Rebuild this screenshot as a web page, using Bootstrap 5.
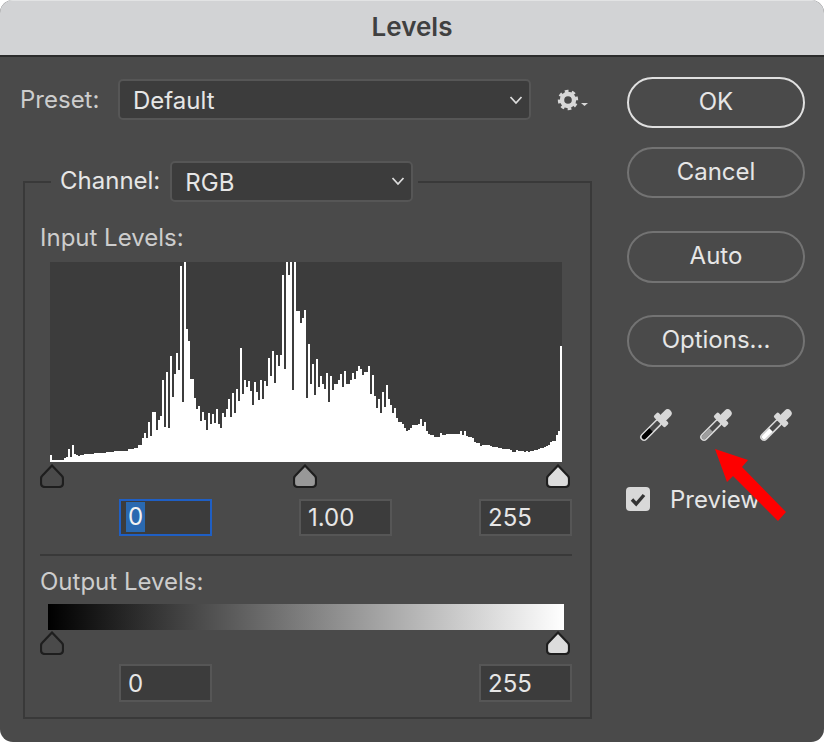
<!DOCTYPE html>
<html lang="en">
<head>
<meta charset="utf-8">
<title>Levels</title>
<link href="https://cdn.jsdelivr.net/npm/bootstrap@5.3.0/dist/css/bootstrap.min.css" rel="stylesheet">
<style>
html,body{margin:0;background:#fff;}
body{width:824px;height:742px;overflow:hidden;font-family:Inter,"Liberation Sans",sans-serif;font-size:24px;}
.lv-dialog{position:relative;width:824px;height:742px;background:#4a4a4a;border-radius:13px;overflow:hidden;color:#e6e6e6;}
.lv-title{height:57px;background:#d2d3d5;border-top:1px solid #e2e3e4;border-bottom:2px solid #2c2c2c;color:#404040;font-weight:600;font-size:26px;line-height:51px;text-align:center;}
.lv-main{padding-left:20px;}
.lv-left{width:572px;}
.lv-right{width:178px;margin-left:35px;padding-top:20px;}
.lv-preset{margin-top:22px;height:41px;}
.lv-label{color:#cdcdcd;font-size:24px;line-height:28px;}
.lv-preset .lv-label{width:98px;}
.lv-select.form-select{height:41px;width:413px;padding:2px 36px 0 13px;font-size:24px;line-height:36px;color:#e6e6e6;background-color:#3c3c3c;border:2px solid #565656;border-radius:5px;box-shadow:none;
background-image:url("data:image/svg+xml,%3Csvg xmlns='http://www.w3.org/2000/svg' viewBox='0 0 14 10'%3E%3Cpath d='M1.5 2 7 8l5.5-6' fill='none' stroke='%23dcdcdc' stroke-width='1.8'/%3E%3C/svg%3E");background-size:14px 10px;background-position:right 6px center;}
.lv-gear{margin-left:26px;}
.lv-group{margin:61px 0 0 3px;width:569px;height:538px;border:2px solid #393939;padding:0 15px;}
.lv-legend{margin:-23px 0 0 11px;width:fit-content;height:42px;background:#4a4a4a;padding:0 5px 0 9px;gap:10px;}
.lv-legend .lv-label{color:#e6e6e6;}
.lv-legend .lv-select.form-select{width:243px;}
.lv-input-title{margin-top:22px;}
.lv-hist{display:block;margin:10px 0 0 10px;width:512px;height:200px;background:#3c3c3c;}
.lv-handles{width:530px;height:24px;margin-top:2px;}
.lv-handles svg{display:block;}
.lv-inputs{margin:11px 0 0 79px;width:453px;}
.lv-field.form-control{width:93px;height:37px;padding:0 7px;background:#3c3c3c;border:2px solid #565656;border-radius:0;color:#e6e6e6;font-size:24px;line-height:33px;box-shadow:none;}
.lv-field.lv-focus{border-color:#1f5fc4;}
.lv-sel{background:#2a69b0;color:#f2f2f2;display:inline-block;line-height:30px;padding:0 2px;margin:1px 0 0 -2px;height:30px;vertical-align:top;}
.lv-rule{height:2px;background:#393939;margin:18px 0 0;width:532px;opacity:1;border:0;}
.lv-output-title{margin-top:12px;}
.lv-ramp{width:516px;height:26px;margin:8px 0 0 8px;background:linear-gradient(90deg,#000 0,#fff 100%);}
.lv-handles.lv-out{margin-top:1px;}
.lv-inputs.lv-outvals{margin-top:9px;}
.lv-inputs.lv-outvals .lv-field.form-control{height:38px;}
.lv-btn.btn{display:block;width:178px;height:51px;padding:0 0 2px;border:2px solid #737373;border-radius:26px;background:transparent;color:#e6e6e6;font-size:24px;line-height:44px;}
.lv-btn.lv-ok{border-color:#e0e0e0;}
.lv-btn.lv-m1{margin-top:19px;}
.lv-btn.lv-m2{margin-top:33px;height:52px;}
.lv-btn.lv-m3{margin-top:32px;height:52px;}
.lv-droppers{margin:42px 0 0 13px;gap:28px;height:32px;}
.lv-droppers svg{overflow:visible;display:block;}
.lv-check{margin:46px 0 0 -1px;padding:0;min-height:0;gap:20px;height:24px;}
.lv-check .form-check-input{float:none;width:24px;height:24px;margin:0;background-color:#d8d8d8;border:0;border-radius:4px;box-shadow:none;opacity:1;
background-image:url("data:image/svg+xml,%3Csvg xmlns='http://www.w3.org/2000/svg' viewBox='0 0 24 24'%3E%3Cpath d='M6 12.5 10.2 17 18 8' fill='none' stroke='%23333' stroke-width='3.4'/%3E%3C/svg%3E");background-size:24px 24px;}
.lv-check .form-check-label{color:#e6e6e6;line-height:24px;padding-top:2px;opacity:1;}
.lv-arrow{position:absolute;left:700px;top:440px;overflow:visible;}
</style>
</head>
<body>
<div class="lv-dialog">
  <div class="lv-title">Levels</div>
  <div class="lv-main d-flex">
    <div class="lv-left">
      <div class="lv-preset d-flex align-items-center">
        <div class="lv-label">Preset:</div>
        <select class="form-select lv-select"><option>Default</option></select>
        <svg class="lv-gear" width="32" height="22" viewBox="0 0 32 22" aria-hidden="true">
          <circle cx="11" cy="11" r="6" fill="none" stroke="#d8d8d8" stroke-width="4.4"/>
          <circle cx="11" cy="11" r="8.8" fill="none" stroke="#d8d8d8" stroke-width="2.8" stroke-dasharray="3.6 3.31" transform="rotate(-22 11 11)"/>
          <path d="M24 14h7l-3.5 3z" fill="#d8d8d8"/>
        </svg>
      </div>
      <div class="lv-group">
        <div class="lv-legend d-flex align-items-center">
          <div class="lv-label">Channel:</div>
          <select class="form-select lv-select"><option>RGB</option></select>
        </div>
        <div class="lv-label lv-input-title">Input Levels:</div>
        <svg class="lv-hist" viewBox="0 0 512 200" shape-rendering="crispEdges" aria-hidden="true"><path id="lvHistPath" fill="#fff" d=""/></svg>
        <div class="lv-handles d-flex justify-content-between">
          <svg width="24" height="24" viewBox="0 0 24 24"><path d="M12 1.5 22 12q1 1 1 3v4q0 4-4 4H5q-4 0-4-4v-4q0-2 1-3z" fill="none" stroke="#1e1e1e" stroke-width="2.2"/></svg>
          <svg width="24" height="24" viewBox="0 0 24 24"><path d="M12 1.5 22 12q1 1 1 3v4q0 4-4 4H5q-4 0-4-4v-4q0-2 1-3z" fill="#989898" stroke="#1e1e1e" stroke-width="2.2"/></svg>
          <svg width="24" height="24" viewBox="0 0 24 24"><path d="M12 1.5 22 12q1 1 1 3v4q0 4-4 4H5q-4 0-4-4v-4q0-2 1-3z" fill="#dcdcdc" stroke="#1e1e1e" stroke-width="2.2"/></svg>
        </div>
        <div class="lv-inputs d-flex justify-content-between">
          <div class="form-control lv-field lv-focus"><span class="lv-sel">0</span></div>
          <input class="form-control lv-field" value="1.00">
          <input class="form-control lv-field" value="255">
        </div>
        <hr class="lv-rule">
        <div class="lv-label lv-output-title">Output Levels:</div>
        <div class="lv-ramp"></div>
        <div class="lv-handles lv-out d-flex justify-content-between">
          <svg width="24" height="24" viewBox="0 0 24 24"><path d="M12 1.5 22 12q1 1 1 3v4q0 4-4 4H5q-4 0-4-4v-4q0-2 1-3z" fill="none" stroke="#1e1e1e" stroke-width="2.2"/></svg>
          <svg width="24" height="24" viewBox="0 0 24 24"><path d="M12 1.5 22 12q1 1 1 3v4q0 4-4 4H5q-4 0-4-4v-4q0-2 1-3z" fill="#dcdcdc" stroke="#1e1e1e" stroke-width="2.2"/></svg>
        </div>
        <div class="lv-inputs lv-outvals d-flex justify-content-between">
          <input class="form-control lv-field" value="0">
          <input class="form-control lv-field" value="255">
        </div>
      </div>
    </div>
    <div class="lv-right">
      <button class="btn lv-btn lv-ok" type="button">OK</button>
      <button class="btn lv-btn lv-m1" type="button">Cancel</button>
      <button class="btn lv-btn lv-m2" type="button">Auto</button>
      <button class="btn lv-btn lv-m3" type="button">Options...</button>
      <div class="lv-droppers d-flex">
        <svg width="32" height="32" viewBox="0 0 32 32" aria-hidden="true"><g transform="rotate(45 16 16)"><rect x="12.9" y="10" width="6.2" height="26" rx="3.1" fill="#4a4a4a" stroke="#d8d8d8" stroke-width="1.6"/><path d="M13.6 23h4.8v9.8a2.4 2.4 0 0 1-4.8 0z" fill="#000"/><rect x="8" y="5.5" width="16" height="6.5" rx="1.8" fill="#d8d8d8"/><rect x="12" y="-4.5" width="8" height="13" rx="4" fill="#d8d8d8"/></g></svg>
        <svg width="32" height="32" viewBox="0 0 32 32" aria-hidden="true"><g transform="rotate(45 16 16)"><rect x="12.9" y="10" width="6.2" height="26" rx="3.1" fill="#4a4a4a" stroke="#d8d8d8" stroke-width="1.6"/><path d="M13.6 23h4.8v9.8a2.4 2.4 0 0 1-4.8 0z" fill="#9e9e9e"/><rect x="8" y="5.5" width="16" height="6.5" rx="1.8" fill="#d8d8d8"/><rect x="12" y="-4.5" width="8" height="13" rx="4" fill="#d8d8d8"/></g></svg>
        <svg width="32" height="32" viewBox="0 0 32 32" aria-hidden="true"><g transform="rotate(45 16 16)"><rect x="12.9" y="10" width="6.2" height="26" rx="3.1" fill="#4a4a4a" stroke="#d8d8d8" stroke-width="1.6"/><path d="M13.6 23h4.8v9.8a2.4 2.4 0 0 1-4.8 0z" fill="#fff"/><rect x="8" y="5.5" width="16" height="6.5" rx="1.8" fill="#d8d8d8"/><rect x="12" y="-4.5" width="8" height="13" rx="4" fill="#d8d8d8"/></g></svg>
      </div>
      <div class="form-check lv-check d-flex align-items-center">
        <input class="form-check-input" type="checkbox" id="lvPreview" checked>
        <label class="form-check-label" for="lvPreview">Preview</label>
      </div>
    </div>
  </div>
  <svg class="lv-arrow" width="100" height="90" viewBox="0 0 100 90" aria-hidden="true"><polygon points="15,9 48,20 42,27 86,72 78,81 33,36 27,42" fill="#fe0000"/></svg>
</div>
<script src="https://cdn.jsdelivr.net/npm/bootstrap@5.3.0/dist/js/bootstrap.bundle.min.js"></script>
<script>
var lvHeights=[7,2,2,2,2,2,2,4,5,13,5,17,8,7,6,7,7,8,8,8,8,8,9,9,9,9,9,9,10,10,10,10,11,11,11,11,11,11,11,13,13,13,14,14,17,17,24,29,24,40,26,50,50,32,42,46,82,35,90,34,106,65,88,109,92,196,60,200,133,121,83,83,64,53,56,41,50,42,32,49,38,48,39,53,38,34,49,45,53,63,45,69,49,73,61,114,68,82,75,81,71,57,80,70,62,82,63,81,76,104,86,111,79,107,96,107,187,93,200,187,200,72,200,151,151,
139,144,152,64,118,78,98,67,103,75,86,78,73,89,60,86,72,78,78,82,88,75,91,78,78,82,89,83,91,96,93,87,90,90,96,68,87,66,54,63,49,70,55,77,63,57,49,54,44,40,40,38,34,31,32,34,37,37,37,38,43,36,40,31,28,27,27,25,25,25,29,27,27,28,28,28,28,28,28,28,31,27,31,26,25,25,24,20,19,19,16,17,17,17,17,16,15,15,15,14,14,13,13,13,13,12,10,10,12,11,11,11,10,11,10,11,11,12,12,13,14,14,15,16,17,20,21,21,27,31,116];
document.getElementById('lvHistPath').setAttribute('d','M0 200'+lvHeights.map(function(h){return 'V'+(200-h)+'h2';}).join('')+'V200Z');
</script>
</body>
</html>
